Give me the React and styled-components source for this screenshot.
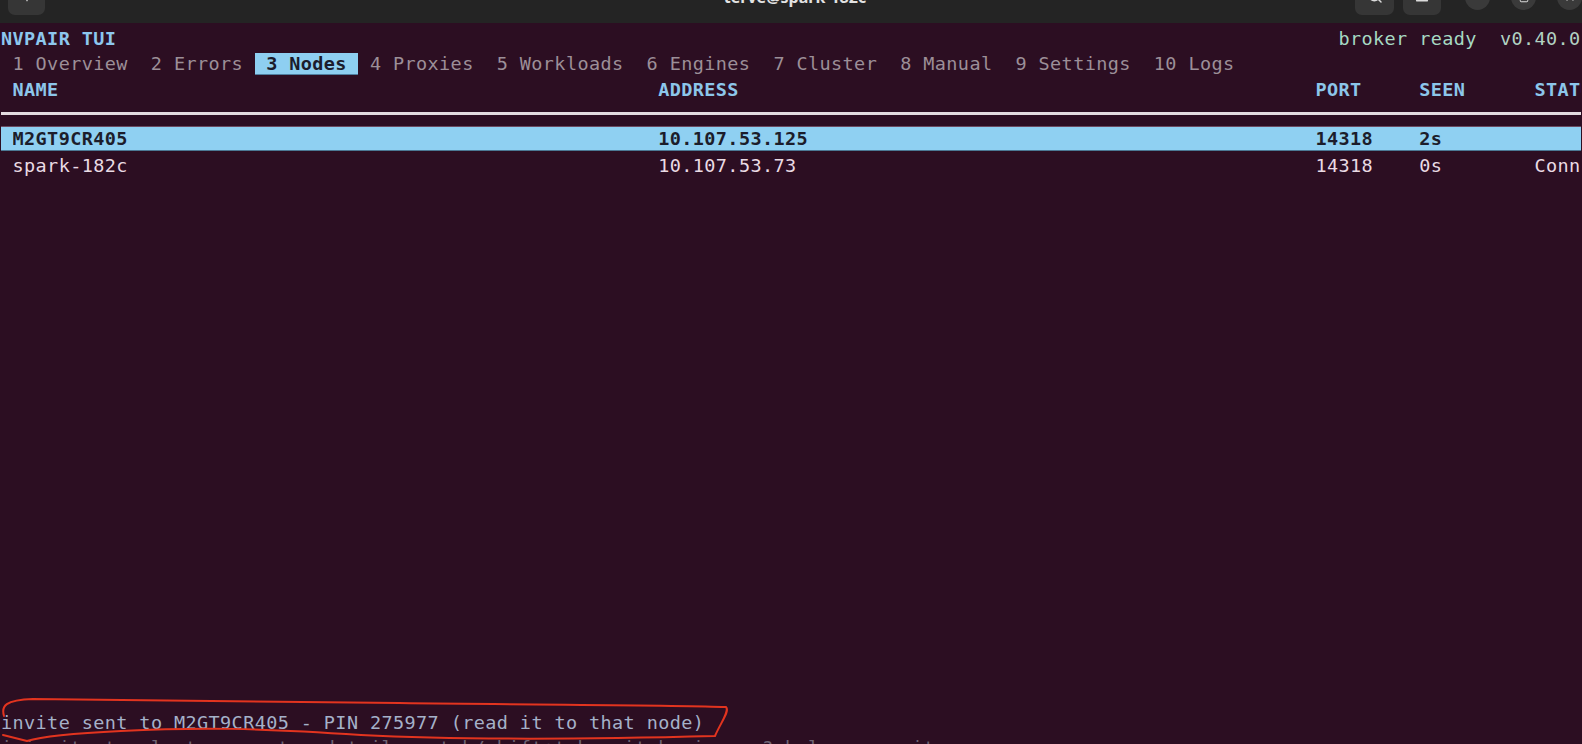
import React from "react";
import styled, { createGlobalStyle } from "styled-components";
import { Search, Menu, Plus, Minus, Square, X } from "lucide-react";

const CW = 11.53; // terminal cell width
const LH = 25.33; // terminal line height

const Global = createGlobalStyle`
  html, body { margin: 0; padding: 0; background: #2c0e22; overflow: hidden; }
  #root { width: 1582px; height: 744px; }
`;

const Window = styled.div`
  width: 1582px;
  height: 744px;
  display: flex;
  flex-direction: column;
  overflow: hidden;
  background: #2c0e22;
`;

const HeaderBar = styled.header`
  flex: 0 0 23px;
  height: 23px;
  background: #242424;
  display: flex;
  align-items: flex-start;
  justify-content: space-between;
  padding: 0 0 0 8px;
  overflow: hidden;
`;

const HeaderGroup = styled.div`
  display: flex;
  align-items: flex-start;
  gap: ${(p) => p.gap || 9}px;
  margin-left: ${(p) => p.ml || 0}px;
`;

const HeaderButton = styled.div`
  width: ${(p) => p.w || 38}px;
  height: 32px;
  margin-top: -17px;
  border-radius: 7px;
  background: #363636;
  display: flex;
  align-items: flex-end;
  justify-content: center;
  color: #dcdcdc;
  padding-bottom: 11px;
  box-sizing: border-box;
`;

const CircleButton = styled.div`
  width: 25px;
  height: 25px;
  margin-top: -15px;
  border-radius: 50%;
  background: #3a3a3a;
  display: flex;
  align-items: flex-end;
  justify-content: center;
  color: #dcdcdc;
  padding-bottom: 7px;
  box-sizing: border-box;
`;

const WindowTitle = styled.div`
  font-family: "Noto Sans", "DejaVu Sans", sans-serif;
  font-weight: 700;
  font-size: 16px;
  line-height: 20px;
  color: #e2e2e2;
  margin-top: -13px;
  margin-left: 190px;
  white-space: nowrap;
`;

const Terminal = styled.main`
  flex: 1 1 auto;
  padding: 3px 0 0 1px;
  overflow: hidden;
  position: relative;
`;

const Screen = styled.div`
  width: ${137 * CW}px;
  overflow: hidden;
  font-family: "DejaVu Sans Mono", "Liberation Mono", monospace;
  font-size: 18.5px;
  letter-spacing: ${(CW - 18.5 * 0.60205).toFixed(3)}px;
  line-height: ${LH}px;
  white-space: pre;
  color: #eadbe4;
`;

const Line = styled.div`
  height: ${LH}px;
  display: flex;
  align-items: center;
  justify-content: ${(p) => p.justify || "flex-start"};
  flex-shrink: 0;
`;

const AppTitle = styled.span`
  color: #8dc7ee;
  font-weight: 700;
`;

const StatusGroup = styled.span`
  display: flex;
`;

const StatusText = styled.span`
  color: ${(p) => p.color};
`;

const Tab = styled.span`
  height: 22px;
  line-height: 22px;
  padding: 0 ${CW}px;
  color: ${(p) => (p.active ? "#1b1c2c" : "#9c8f98")};
  background: ${(p) => (p.active ? "#8ecff1" : "transparent")};
  font-weight: ${(p) => (p.active ? 700 : 400)};
  box-shadow: ${(p) => (p.active ? "inset 0 -1px 0 #4f7fa0" : "none")};
`;

const TableRow = styled.div`
  height: ${(p) => (p.selected ? LH - 2 : LH)}px;
  margin-bottom: ${(p) => (p.selected ? 2 : 0)}px;
  display: flex;
  align-items: center;
  padding-left: ${CW}px;
  background: ${(p) => (p.selected ? "#8fd0f2" : "transparent")};
  color: ${(p) => (p.head ? "#8cc6ea" : p.selected ? "#1c1d2b" : "#eadbe4")};
  font-weight: ${(p) => (p.head || p.selected ? 700 : 400)};
  box-shadow: ${(p) => (p.selected ? "inset 0 -1px 0 #4c7894, 0 -1px 0 #6a4a60" : "none")};
`;

const Cell = styled.span`
  flex: 0 0 ${(p) => p.cols * CW}px;
  width: ${(p) => p.cols * CW}px;
  overflow: hidden;
`;

const Rule = styled.div`
  height: ${LH}px;
  display: flex;
  align-items: center;
  &::after {
    content: "";
    display: block;
    width: 100%;
    height: 3px;
    margin-top: -2px;
    background: #e3dbe0;
  }
`;

const Blank = styled.div`
  height: ${(p) => p.lines * LH}px;
`;

const Message = styled.div`
  height: ${LH}px;
  display: flex;
  align-items: center;
  color: ${(p) => (p.dim ? "#6e6474" : "#a5b1c9")};
`;

const Annotation = styled.svg`
  position: absolute;
  left: 0;
  top: 0;
  width: 1582px;
  height: 744px;
  pointer-events: none;
`;

const tabs = [
  "1 Overview",
  "2 Errors",
  "3 Nodes",
  "4 Proxies",
  "5 Workloads",
  "6 Engines",
  "7 Cluster",
  "8 Manual",
  "9 Settings",
  "10 Logs",
];

const columns = [
  { key: "name", label: "NAME", cols: 56 },
  { key: "address", label: "ADDRESS", cols: 57 },
  { key: "port", label: "PORT", cols: 9 },
  { key: "seen", label: "SEEN", cols: 10 },
  { key: "status", label: "STATUS", cols: 20 },
];

const nodes = [
  { name: "M2GT9CR405", address: "10.107.53.125", port: "14318", seen: "2s", status: "", selected: true },
  { name: "spark-182c", address: "10.107.53.73", port: "14318", seen: "0s", status: "Connected" },
];

export default function App() {
  return (
    <>
      <Global />
      <Window>
        <HeaderBar>
          <HeaderGroup>
            <HeaderButton w={37}>
              <Plus size={16} strokeWidth={2} />
            </HeaderButton>
          </HeaderGroup>
          <WindowTitle>terve@spark-182c</WindowTitle>
          <HeaderGroup gap={9}>
            <HeaderButton w={39}>
              <Search size={16} strokeWidth={2.2} />
            </HeaderButton>
            <HeaderButton w={38}>
              <Menu size={16} strokeWidth={2.2} />
            </HeaderButton>
            <HeaderGroup gap={21} ml={15}>
              <CircleButton>
                <Minus size={12} strokeWidth={2.4} />
              </CircleButton>
              <CircleButton>
                <Square size={10} strokeWidth={2.4} />
              </CircleButton>
              <CircleButton>
                <X size={12} strokeWidth={2.4} />
              </CircleButton>
            </HeaderGroup>
          </HeaderGroup>
        </HeaderBar>
        <Terminal>
          <Screen>
            <Line justify="space-between">
              <AppTitle>NVPAIR TUI</AppTitle>
              <StatusGroup>
                <StatusText color="#a6d9c3">broker ready</StatusText>
                <StatusText color="#b2d2c2">{"  v0.40.0"}</StatusText>
              </StatusGroup>
            </Line>
            <Line>
              {tabs.map((t) => (
                <Tab key={t} active={t === "3 Nodes"}>
                  {t}
                </Tab>
              ))}
            </Line>
            <TableRow head>
              {columns.map((c) => (
                <Cell key={c.key} cols={c.cols}>
                  {c.label}
                </Cell>
              ))}
            </TableRow>
            <Rule />
            {nodes.map((n) => (
              <TableRow key={n.name} selected={n.selected}>
                {columns.map((c) => (
                  <Cell key={c.key} cols={c.cols}>
                    {n[c.key]}
                  </Cell>
                ))}
              </TableRow>
            ))}
            <Blank lines={21} />
            <Message>invite sent to M2GT9CR405 - PIN 275977 (read it to that node)</Message>
            <Message dim>
              i invite to cluster · enter details · tab/shift+tab switch view · ? help · q quit
            </Message>
          </Screen>
          <Annotation viewBox="0 0 1582 744">
            <path
              d="M 5 716 C 2 706 6 700 34 699 L 400 703 C 560 705 680 705 727 707 C 731 711 722 722 716 736 C 600 739 460 740 362 735 C 260 728 200 727 122 731 C 80 733 44 736 28 741 C 20 739 12 737 4 735"
              fill="none"
              stroke="#e2341f"
              strokeWidth="2"
              strokeLinecap="round"
              strokeLinejoin="round"
              transform="translate(-1 -23)"
            />
          </Annotation>
        </Terminal>
      </Window>
    </>
  );
}
